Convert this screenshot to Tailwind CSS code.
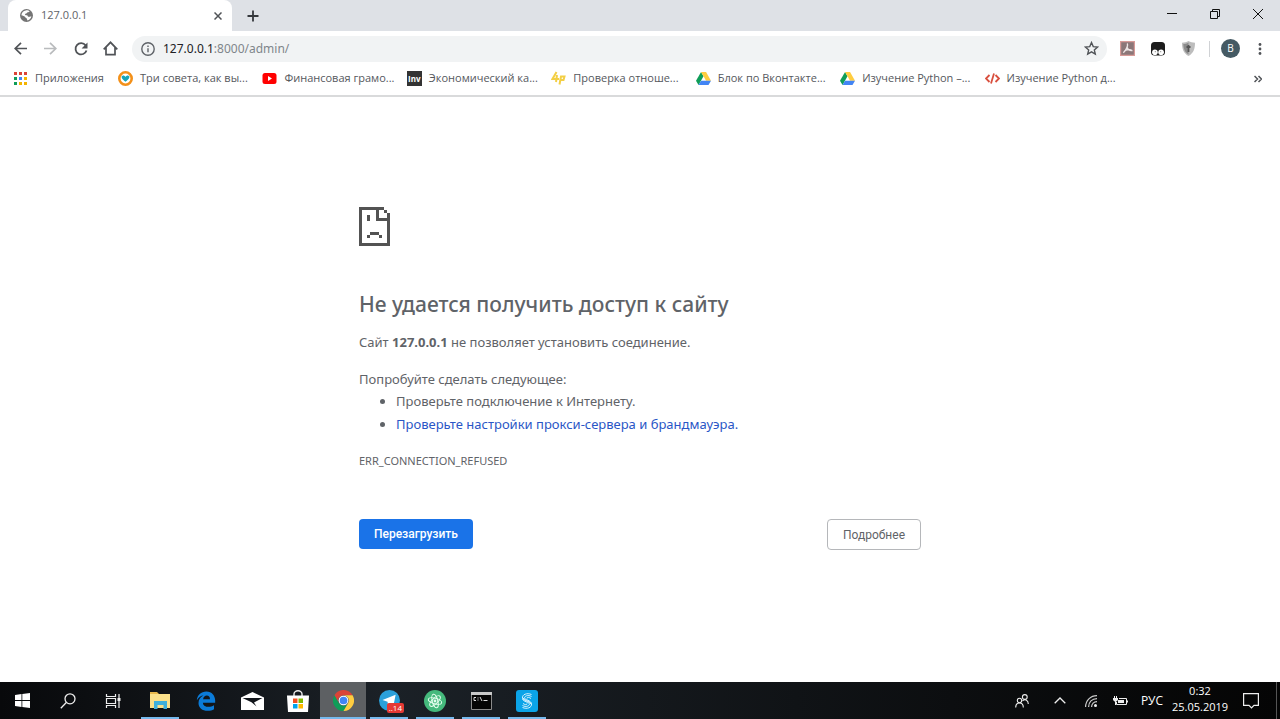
<!DOCTYPE html>
<html lang="ru">
<head>
<meta charset="utf-8">
<meta name="viewport" content="width=device-width, initial-scale=1">
<title>127.0.0.1</title>
<script src="https://cdn.jsdelivr.net/npm/@tailwindcss/browser@4"></script>
</head>
<body class="flex min-h-screen flex-col bg-white font-['Open_Sans','Noto_Sans',sans-serif] text-[#5f6368]">

<svg class="hidden" aria-hidden="true">
  <symbol id="drive" viewBox="0 0 16 14">
    <path fill="#0f9d58" d="M5.4 0 0 9.3 2.7 14 8 4.7z"/>
    <path fill="#ffcd40" d="M5.4 0h5.3L16 9.3h-5.3z"/>
    <path fill="#4285f4" d="M2.7 14 5.4 9.3H16L13.3 14z"/>
  </symbol>
</svg>

<header>
  <div class="flex h-[31px] items-stretch bg-[#dee1e6] pl-2">
    <div class="flex w-56 items-center rounded-t-lg bg-white pr-1.5 pl-3">
      <svg class="size-[13px]" viewBox="0 0 16 16"><circle cx="8" cy="8" r="8" fill="#757575"/><path fill="#fff" d="M7 1.7C9 1.300 11 2 12 3c-1 .2-1.400 1-2.500 1C8.500 4 9 5.500 7.500 5.500S6 7 6.500 7.500 9 7 9.500 8.500 11 9.500 12 9.500l2-.5c-.3 2.500-2.500 5-5 5.300.2-1-.5-1.300-.5-2.300S7 11 6.500 10 3 8 1.700 7.600C2 4.500 4 2.200 7 1.700z"/></svg>
      <span class="ml-2 flex-1 text-[11px]">127.0.0.1</span>
      <button aria-label="Закрыть вкладку" class="p-1"><svg class="size-2" viewBox="0 0 8 8" stroke="#505357" stroke-width="1.500"><path d="M.5.5l7 7M7.500.5l-7 7"/></svg></button>
    </div>
    <button aria-label="Новая вкладка" class="ml-[7px] px-2"><svg class="size-3" viewBox="0 0 12 12" stroke="#35383c" stroke-width="1.800"><path d="M6 .5v11M.5 6h11"/></svg></button>
    <div class="ml-auto flex items-center pr-px pb-1">
      <button aria-label="Свернуть" class="grid w-[43px] place-items-center"><svg class="size-[10px]" viewBox="0 0 10 10" stroke="#111"><path d="M0 4.500h10"/></svg></button>
      <button aria-label="Восстановить" class="grid w-[43px] place-items-center"><svg class="size-[10px]" viewBox="0 0 10 10" fill="none" stroke="#111"><path d="M.5 2.500h7v7h-7zM2.500 2.500v-2h7v7h-2"/></svg></button>
      <button aria-label="Закрыть" class="grid w-[43px] place-items-center"><svg class="size-[10px]" viewBox="0 0 10 10" stroke="#111"><path d="M0 0l10 10M10 0L0 10"/></svg></button>
    </div>
  </div>

  <div class="flex h-[35px] items-center pr-4 pl-3">
    <nav class="flex items-center">
      <button aria-label="Назад" class="grid w-[30px] justify-start pl-0.5"><svg class="size-[13px]" viewBox="0 0 13 13" fill="none" stroke="#505357" stroke-width="1.700"><path d="M13 6.500H1.200M7 .8L1.200 6.500 7 12.200"/></svg></button>
      <button aria-label="Вперёд" class="grid w-[30px] justify-start pl-0.5"><svg class="size-[13px]" viewBox="0 0 13 13" fill="none" stroke="#b9bbbd" stroke-width="1.700"><path d="M0 6.500h11.800M6 .8l5.800 5.700L6 12.200"/></svg></button>
      <button aria-label="Обновить" class="grid w-[30px] justify-start pl-0.5"><svg class="size-[14px]" viewBox="0 0 14 14" fill="none" stroke="#505357" stroke-width="1.800"><path d="M11.600 3.400A5.600 5.600 0 1 0 12.500 8.500"/><path fill="#505357" stroke="none" d="M13.500.5v6H7.600z"/></svg></button>
      <button aria-label="Главная" class="grid w-[30px] justify-start pl-px"><svg class="size-[15px]" viewBox="0 0 15 15" fill="none" stroke="#505357" stroke-width="1.700"><path d="M.7 8.300L7.500 1.300l6.800 7M3 6.500v7.200h9V6.500"/></svg></button>
    </nav>
    <div class="flex h-[26px] flex-1 items-center rounded-full bg-[#f1f3f4] pr-2 pl-[9px] font-['Noto_Sans',sans-serif] text-[12px]">
      <svg class="size-[14px]" viewBox="0 0 14 14" fill="none" stroke="#5f6368" stroke-width="1.400"><circle cx="7" cy="7" r="6.200"/><path d="M7 6.200v4M7 3.500v1.500"/></svg>
      <label for="url" class="ml-2 text-[#202124]">127.0.0.1</label>
      <input id="url" type="text" value=":8000/admin/" class="min-w-0 flex-1 bg-transparent text-[#80868b] outline-none">
      <button aria-label="Добавить в закладки"><svg class="size-[15px]" viewBox="0 0 24 24" fill="none" stroke="#505357" stroke-width="2.200"><path d="M12 2.500l2.800 6.500 7 .6-5.300 4.600 1.600 6.900L12 17.400l-6.100 3.700 1.600-6.900L2.200 9.600l7-.6z"/></svg></button>
    </div>
    <div class="flex items-center pl-[13px]">
      <button aria-label="Adobe Acrobat"><svg class="size-[15px]" viewBox="0 0 15 15"><path fill="#8b7778" stroke="#d79a97" stroke-width="1.200" d="M.6.6h13.800v13.800H.6z"/><path fill="none" stroke="#eee5e5" stroke-width="1.300" d="M7 2.500c1.500 1-.2 6-3.700 9.300M7 6c1 2.500 3 4 5.500 3.500M4.500 9.800c2-1 4.500-1.500 7-.8"/></svg></button>
      <button aria-label="Расширение" class="ml-4"><svg class="size-[14px]" viewBox="0 0 14 14"><rect width="14" height="13.500" rx="3.500" fill="#1c1c1c"/><circle cx="3.900" cy="10.200" r="2.800" fill="#fff"/><circle cx="10.100" cy="10.200" r="2.800" fill="#fff"/><path d="M3.800 9.700h1M9.200 9.700h1" stroke="#777"/></svg></button>
      <button aria-label="Защита" class="ml-4"><svg class="size-[15px]" viewBox="0 0 15 15"><path fill="#bdbdbd" d="M7.500 0c2 1.200 4 1.700 6.500 1.700 0 6.300-1.500 10.300-6.500 13.300C2.500 12 1 8 1 1.700 3.500 1.700 5.500 1.200 7.500 0z"/><path fill="#8c8c8c" d="M7.500 1.500v12c-3.700-2.500-5-5.500-5.200-10.500 2 0 3.700-.5 5.200-1.500z"/><path stroke="#555" stroke-width="1.800" d="M7.500 4v7M5.500 6h4"/></svg></button>
      <span class="ml-[13px] h-4 w-px bg-[#d0d2d5]"></span>
      <button aria-label="Профиль" class="ml-[11px] grid size-[19px] place-items-center rounded-full bg-[#455a64] text-[10px] text-white">B</button>
      <button aria-label="Меню" class="ml-4 grid w-2 place-items-center"><svg class="h-3 w-1" viewBox="0 0 4 12" fill="#505357"><circle cx="2" cy="1.500" r="1.400"/><circle cx="2" cy="6" r="1.400"/><circle cx="2" cy="10.500" r="1.400"/></svg></button>
    </div>
  </div>

  <nav class="flex h-[31px] items-center border-b-2 border-[#d9dadb] pr-[18px] pb-1 pl-[14px] text-[11px] whitespace-nowrap text-[#55585d]">
    <a href="#" class="flex w-[104px] items-center gap-2"><svg class="size-[13px]" viewBox="0 0 13 13"><path fill="#db4437" d="M0 0h3v3H0zM5 0h3v3H5zM10 0h3v3h-3z"/><path fill="#0f9d58" d="M0 5h3v3H0zM0 10h3v3H0z"/><path fill="#4285f4" d="M5 5h3v3H5z"/><path fill="#f4b400" d="M10 5h3v3h-3zM5 10h3v3H5zM10 10h3v3h-3z"/></svg>Приложения</a>
    <div class="grid max-w-[1011px] flex-1 grid-cols-7">
      <a href="#" class="flex items-center gap-[7px]"><svg class="size-[15px]" viewBox="0 0 15 15"><circle cx="7.500" cy="7.500" r="6.200" fill="#fff" stroke="#f39019" stroke-width="2.600"/><path fill="#16a5b8" d="M3.500 5.500C5 4 6.500 4.500 7.500 6c1-1.500 2.500-2 4-.5C11.500 8 9 9.500 7.500 10.800 6 9.500 3.500 8 3.500 5.500z"/></svg>Три совета, как вы...</a>
      <a href="#" class="flex items-center gap-[7px]"><svg class="size-[15px]" viewBox="0 0 15 15"><rect x=".5" y="2" width="14" height="11" rx="2.500" fill="#f00"/><path fill="#fff" d="M6 5v5l4-2.500z"/></svg>Финансовая грамо...</a>
      <a href="#" class="flex items-center gap-[7px]"><span class="grid size-[15px] place-items-center bg-[#333] text-[8px] font-bold text-white">Inv</span>Экономический ка...</a>
      <a href="#" class="flex items-center gap-[7px]"><svg class="size-[15px]" viewBox="0 0 15 15" fill="none" stroke="#f3cf45" stroke-width="2"><path d="M5.500 1L1.500 8H8M6 4L5 11M8.500 13.500L10 5.500h3.500L12.500 9H9.500"/></svg>Проверка отноше...</a>
      <a href="#" class="flex items-center gap-[7px]"><svg class="size-[15px]"><use href="#drive"/></svg>Блок по Вконтакте...</a>
      <a href="#" class="flex items-center gap-[7px]"><svg class="size-[15px]"><use href="#drive"/></svg>Изучение Python –...</a>
      <a href="#" class="flex items-center gap-[7px]"><svg class="size-[15px]" viewBox="0 0 15 15" fill="none" stroke="#d9503f" stroke-width="1.800"><path d="M4.500 4L1 7.500 4.500 11M10.500 4L14 7.500 10.500 11M9 2.500L6 12.500"/></svg>Изучение Python д...</a>
    </div>
    <button aria-label="Другие закладки" class="ml-auto"><svg class="size-2" viewBox="0 0 8 8" fill="none" stroke="#505357" stroke-width="1.500"><path d="M.5 1l3 3-3 3M4.500 1l3 3-3 3"/></svg></button>
  </nav>
</header>

<main class="mx-auto w-full max-w-[562px] flex-1 pt-[110px] font-['Noto_Sans',sans-serif]">
  <svg class="h-[39px] w-[31px]" viewBox="0 0 93 117" fill="#535353" shape-rendering="crispEdges"><path d="M0 0h76v8H8v101h77V17h8v100H0zM76 9h9v9h-9zM51 0h9v33h33v8H51zM24 24h9v17h-9zM33 75h27v8H33zM24 83h9v9h-9zM60 83h9v9h-9z"/></svg>
  <h1 class="mt-[43px] text-[21px] leading-[30px] font-medium">Не удается получить доступ к сайту</h1>
  <p class="mt-3 text-[13px] leading-[23px]">Сайт <strong>127.0.0.1</strong> не позволяет установить соединение.</p>
  <p class="mt-[14px] text-[13px] leading-[22px]">Попробуйте сделать следующее:</p>
  <ul class="list-disc pl-[37px] text-[13px] leading-[23px]">
    <li>Проверьте подключение к Интернету.</li>
    <li><a href="#" class="text-[#2a56c6]">Проверьте настройки прокси-сервера и брандмауэра.</a></li>
  </ul>
  <p class="mt-4 text-[11px] leading-[18px]">ERR_CONNECTION_REFUSED</p>
  <div class="mt-[49px] flex items-start justify-between font-['Roboto','Liberation_Sans',sans-serif] text-[12px]">
    <button class="h-[30px] rounded bg-[#1a73e8] px-[15px] font-medium text-white">Перезагрузить</button>
    <button class="h-[31px] rounded border border-[#b5b7ba] px-[15px]">Подробнее</button>
  </div>
</main>

<footer class="flex h-[37px] items-stretch justify-between bg-linear-to-r from-[#08090b] via-[#1b2127] via-30% to-[#050505] text-white">
  <div class="flex items-stretch">
    <button aria-label="Пуск" class="grid w-[45px] place-items-center"><svg class="size-[15px]" viewBox="0 0 15 15" fill="#fff"><path d="M0 2l6.500-.9v6H0zM7.300 1L15 0v7.100H7.300zM0 7.900h6.500v6L0 13zM7.300 7.900H15V15l-7.700-1z"/></svg></button>
    <button aria-label="Поиск" class="grid w-[45px] place-items-center"><svg class="size-4" viewBox="0 0 16 16" fill="none" stroke="#eee" stroke-width="1.300"><circle cx="10" cy="5.800" r="5"/><path d="M6.300 9.500L.8 15.200"/></svg></button>
    <button aria-label="Представление задач" class="grid w-[45px] place-items-center"><svg class="size-4" viewBox="0 0 16 16" fill="none" stroke="#eee" stroke-width="1.200"><path d="M1.500 1v2.500h9V1M1.500 5.500h9v5h-9zM1.500 15v-2.500h9V15M14 1v14"/><path fill="#eee" stroke="none" d="M12.500 5h3v3h-3z"/></svg></button>
    <button aria-label="Проводник" class="mr-1 ml-1.5 grid w-[38px] place-items-center border-b-2 border-[#76b9ed] pt-0.5"><svg class="h-[17px] w-5" viewBox="0 0 20 17"><path fill="#e8b84b" d="M0 0h7l2 2h11v5H0z"/><path fill="#fbe08a" d="M0 2h20v14H0z"/><path fill="#3fb0dc" d="M4 9h13v8h-3.500v-4h-6v4H4z"/></svg></button>
    <button aria-label="Microsoft Edge" class="grid w-[46px] place-items-center"><svg class="size-[20px]" viewBox="0 0 24 24"><path fill="#0b7bd8" d="M1 11.200C1.500 5 6 .5 12.500.5 19 .5 23 5.500 23 11.500V14H8.300c.2 3.500 3.200 5 6.700 5 2.500 0 4.500-.7 6.600-2v5c-2 1.200-4.500 1.800-7.600 1.800C7.500 23.800 3 20 3 14.300c0-4 2.300-7.300 6-9C6 5.300 3.200 7.500 1 11.200zM8.500 9.800h8.300C16.800 7 15.300 5.500 13 5.500S9 7 8.500 9.800z"/></svg></button>
    <button aria-label="Почта" class="grid w-[46px] place-items-center"><svg class="h-[18px] w-[23px]" viewBox="0 0 23 18"><path fill="#fff" d="M0 5.500L11.500 0 23 5.500V18H0z"/><path fill="#11151a" d="M1.500 6h20L13 10.500l2.500 4-5-4.300z"/></svg></button>
    <button aria-label="Microsoft Store" class="grid w-[45px] place-items-center"><svg class="size-[22px]" viewBox="0 0 22 22"><path fill="none" stroke="#eee" stroke-width="1.400" d="M7 6V4a4 3.300 0 0 1 8 0v2"/><path fill="#fff" d="M0 5.500h22L21 22H1z"/><path fill="#f25022" d="M6 8.500h4.500V13H6z"/><path fill="#7fba00" d="M11.500 8.500H16V13h-4.500z"/><path fill="#00a4ef" d="M6 14h4.500v4.500H6z"/><path fill="#ffb900" d="M11.500 14H16v4.500h-4.500z"/></svg></button>
    <button aria-label="Google Chrome" class="grid w-[46px] place-items-center border-b-2 border-[#76b9ed] bg-[#5d6063] pt-0.5"><svg class="size-[21px]" viewBox="0 0 24 24"><path fill="#db4437" d="M1.600 6A12 12 0 0 1 22.400 6H12a6 6 0 0 0-5.200 9z"/><path fill="#0f9d58" d="M1.600 6A12 12 0 0 0 12 24l5.200-9A6 6 0 0 1 6.800 15z"/><path fill="#ffcd40" d="M22.400 6A12 12 0 0 1 12 24l5.200-9A6 6 0 0 0 12 6z"/><circle cx="12" cy="12" r="5.500" fill="#fff"/><circle cx="12" cy="12" r="4.400" fill="#4285f4"/></svg></button>
    <button aria-label="Telegram" class="relative mx-1 grid w-[38px] place-items-center border-b-2 border-[#76b9ed] pt-0.5"><svg class="size-[21px]" viewBox="0 0 24 24"><circle cx="12" cy="12" r="12" fill="#2ba0da"/><path fill="#fff" d="M4 11.500L19 5.500 16.500 18l-4-3-2.300 2.300-.4-4z"/></svg><span class="absolute right-1 bottom-1 rounded-xs bg-[#e53935] px-0.5 text-[8px] leading-[10px]">..14</span></button>
    <button aria-label="Atom" class="mx-1 grid w-[38px] place-items-center border-b-2 border-[#76b9ed] pt-0.5"><svg class="size-[22px]" viewBox="0 0 24 24" fill="none" stroke="#e8fff0" stroke-width="1.100"><circle cx="12" cy="12" r="12" fill="#45b97c" stroke="none"/><ellipse cx="12" cy="12" rx="3" ry="7.500" transform="rotate(-15 12 12)"/><ellipse cx="12" cy="12" rx="3" ry="7.500" transform="rotate(45 12 12)"/><ellipse cx="12" cy="12" rx="3" ry="7.500" transform="rotate(105 12 12)"/><circle cx="12" cy="12" r="1" fill="#fff"/></svg></button>
    <button aria-label="Командная строка" class="mx-1 grid w-[38px] place-items-center border-b-2 border-[#76b9ed] pt-0.5"><svg class="h-[18px] w-[21px]" viewBox="0 0 21 18"><path fill="#050505" stroke="#8b8b8b" d="M.5.5h20v17H.5z"/><path fill="#c8c8c8" d="M0 0h21v3H0z"/><path fill="none" stroke="#ddd" d="M5 5.500H3v3h2M7 5.500v1M7 7.500v1M9 5l2 4M12.500 8.500h4"/></svg></button>
    <button aria-label="Приложение S" class="mx-1 grid w-[38px] place-items-center border-b-2 border-[#76b9ed] pt-0.5"><svg class="size-[22px]" viewBox="0 0 22 22" fill="none" stroke="#d8f3ff" stroke-width="1"><rect width="22" height="22" rx="3" fill="#0ba4e8" stroke="none"/><path d="M15.500 4.500C11 2.500 6 4.500 6.500 8c.3 2.500 6 3 8.500 6M15.500 6.500C12 4.500 8.500 6 8.500 8c0 1.500 6.500 2.500 7 5.500M15 8.500C13 7 10.500 7 11 8.500M6.500 17.500c4.500 2 9.500 0 9-3.500-.3-2.500-6-3-8.500-6M6.500 15.500c3.500 2 7 .5 7-1.500 0-1.500-6.500-2.500-7-5M7 13.500c2 1.500 4.500 1.500 4 0"/></svg></button>
  </div>
  <div class="flex items-stretch text-[12px]">
    <button aria-label="Люди" class="grid w-[38px] place-items-center"><svg class="size-[14px]" viewBox="0 0 14 14" fill="none" stroke="#eee" stroke-width="1.100"><circle cx="4.500" cy="6.500" r="2.200"/><path d="M.7 13.500c0-3 1.500-4.500 3.800-4.500s3.800 1.500 3.800 4.500"/><circle cx="9.800" cy="3" r="2.400"/><path d="M7.500 6.800c3-2.300 5.800-.3 5.800 3.200"/></svg></button>
    <button aria-label="Скрытые значки" class="grid w-[38px] place-items-center"><svg class="h-[7px] w-3" viewBox="0 0 12 7" fill="none" stroke="#eee" stroke-width="1.300"><path d="M.7 6.300L6 1l5.300 5.300"/></svg></button>
    <button aria-label="Сеть" class="grid w-6 place-items-center"><svg class="size-3" viewBox="0 0 12 12" fill="none" stroke="#ccc" stroke-width="1.200"><path d="M.6 12C.6 5.500 5.500.6 12 .6M3.600 12C3.600 7 7 3.600 12 3.600M6.600 12c0-3.200 2.200-5.400 5.400-5.400"/><circle cx="10.500" cy="10.500" r="1.500" fill="#eee" stroke="none"/></svg></button>
    <button aria-label="Батарея" class="grid w-[34px] place-items-center"><svg class="h-[10px] w-[15px]" viewBox="0 0 15 10" fill="none" stroke="#eee"><path d="M6 2.500h7.500v6h-10V6M14.500 4.500v2"/><path fill="#eee" stroke="none" d="M5 4h6v3H5zM0 2h5v2L3.500 5.500h-2L0 4zM1 0h1v2H1zM3 0h1v2H3zM2 5h1v4H2z"/></svg></button>
    <button class="w-[30px]">РУС</button>
    <button class="w-[66px] pb-1 text-center text-[11px] leading-4"><time datetime="2019-05-25T00:32">0:32<br>25.05.2019</time></button>
    <button aria-label="Уведомления" class="grid w-[35px] place-items-center"><svg class="size-4" viewBox="0 0 16 16" fill="none" stroke="#eee" stroke-width="1.200"><path d="M.6.600h14.800v11.800H11L8.500 15 6 12.400H.6z"/></svg></button>
    <button aria-label="Свернуть все окна" class="ml-2 w-1 border-l border-[#555]"></button>
  </div>
</footer>
</body>
</html>
